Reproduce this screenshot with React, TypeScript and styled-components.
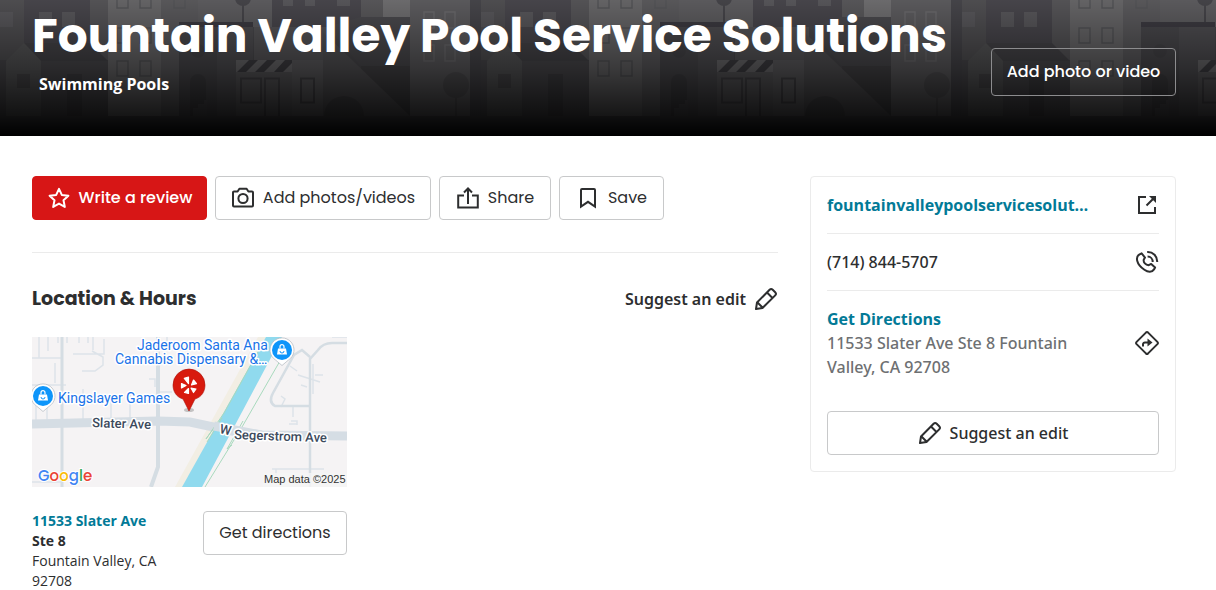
import React from "react";
import styled, { createGlobalStyle, css } from "styled-components";

const display = `Poppins, Inter, "Liberation Sans", sans-serif`;
const body = `"Open Sans", "Noto Sans", sans-serif`;
const label = `"Noto Sans", "Open Sans", sans-serif`;
const ink = "#2d2e2f";
const teal = "#027a97";
const line = "#ebebeb";

const GlobalStyle = createGlobalStyle`
  *, *::before, *::after { box-sizing: border-box; }
  body { margin: 0; background: #fff; color: ${ink}; font-family: ${body}; font-size: 16px; line-height: 24px; }
  h1, h2, p, address { margin: 0; font-style: normal; }
  a { color: ${teal}; text-decoration: none; }
  svg { display: block; flex: none; }
`;

const Hero = styled.header`
  display: grid;
  background: #000;
  > * { grid-area: 1 / 1; }
`;
const HeroContent = styled.div`
  position: relative;
  display: flex;
  justify-content: space-between;
  align-items: flex-end;
  padding: 0 40px 40px 32px;
`;
const Title = styled.h1`
  font: 700 47px/56px ${display};
  color: #fff;
  padding-top: 8px;
`;
const Category = styled.a`
  display: inline-block;
  margin: 8px 0 0 7px;
  color: #fff;
  font-weight: 700;
`;
const Columns = styled.main`
  display: flex;
  align-items: flex-start;
  gap: 32px;
  padding: 40px 40px 0 32px;
`;
const Primary = styled.div`
  flex: 1;
  min-width: 0;
`;
const Sidebar = styled.aside`
  flex: 0 0 366px;
  border: 1px solid ${line};
  border-radius: 4px;
  padding: 0 16px 16px;
`;
const Actions = styled.div`
  display: flex;
  gap: 8px;
  padding-bottom: 32px;
  border-bottom: 1px solid ${line};
`;

type ButtonKind = "primary" | "outline" | "hero";
const Button = styled.button<{ $kind?: ButtonKind; $min?: number }>`
  display: flex;
  align-items: center;
  justify-content: center;
  gap: 8px;
  height: 44px;
  min-width: ${(p) => p.$min ?? 0}px;
  padding: 0 12px;
  border: 1px solid #c8c9ca;
  border-radius: 4px;
  background: #fff;
  color: ${ink};
  font: 400 16px/24px ${display};
  white-space: nowrap;
  cursor: pointer;
  ${(p) =>
    p.$kind === "primary" &&
    css`
      background: #d71616;
      border-color: #d71616;
      color: #fff;
      font-weight: 500;
    `}
  ${(p) =>
    p.$kind === "hero" &&
    css`
      height: 48px;
      background: transparent;
      border-color: #8c8c8e;
      color: #fff;
      font-weight: 500;
    `}
`;
const WideButton = styled(Button)`
  width: 100%;
  margin-top: 16px;
  font: 500 16px/24px ${label};
`;
const SectionHead = styled.div`
  display: flex;
  justify-content: space-between;
  align-items: center;
  padding: 32px 0 24px;
`;
const SectionTitle = styled.h2`
  font: 700 19px/28px ${display};
`;
const TextButton = styled.button`
  display: flex;
  align-items: center;
  gap: 8px;
  padding: 0;
  border: 0;
  background: none;
  color: ${ink};
  font: 600 16px/24px ${label};
  cursor: pointer;
`;
const Place = styled.div`
  width: 315px;
`;
const PlaceFoot = styled.div`
  display: flex;
  justify-content: space-between;
  align-items: flex-start;
  padding-top: 24px;
`;
const Address = styled.address`
  width: 140px;
  font-size: 14px;
  line-height: 20px;
  a, strong { font-weight: 700; }
`;
const InfoRow = styled.div`
  display: flex;
  justify-content: space-between;
  align-items: center;
  padding: 16px 0;
  & + & { border-top: 1px solid ${line}; }
`;
const InfoText = styled.div`
  width: 262px;
  font: 500 16px/24px ${label};
  color: ${ink};
  a { display: block; font-family: ${body}; font-weight: 700; overflow: hidden; text-overflow: ellipsis; white-space: nowrap; }
  p { color: #6e7072; }
`;

const Svg = ({ children, w = 2 }: { children: React.ReactNode; w?: number }) => (
  <svg width="24" height="24" viewBox="0 0 24 24" fill="none" stroke="currentColor" strokeWidth={w} strokeLinejoin="round" aria-hidden="true">
    {children}
  </svg>
);
const StarIcon = () => (
  <Svg>
    <path d="M12 2.900 14.800 8.900 21.400 9.700 16.500 14.200 17.800 20.900 12 17.600 6.200 20.900 7.500 14.200 2.600 9.700 9.200 8.900Z" />
  </Svg>
);
const CameraIcon = () => (
  <Svg>
    <path d="M3 5.500H6.600L8.400 2.800H15.600L17.400 5.500H21A1 1 0 0 1 22 6.500V19.500A1 1 0 0 1 21 20.500H3A1 1 0 0 1 2 19.500V6.500A1 1 0 0 1 3 5.500Z" />
    <circle cx="12" cy="12.500" r="4.600" />
  </Svg>
);
const ShareIcon = () => (
  <Svg>
    <path d="M8 9.500H2.200V21.500H21.800V9.500H16M12 18V3M8 6.500 12 2.500 16 6.500" strokeLinejoin="miter" />
  </Svg>
);
const BookmarkIcon = () => (
  <Svg>
    <path d="M6 3H18A1 1 0 0 1 19 4V20.500L12 15.800 5 20.500V4A1 1 0 0 1 6 3Z" strokeLinejoin="miter" />
  </Svg>
);
const PencilIcon = () => (
  <Svg>
    <path d="M2 22 3 15.500 15.600 2.800A2.200 2.200 0 0 1 18.700 2.800L21.200 5.300A2.200 2.200 0 0 1 21.200 8.400L8.500 21ZM13 5.500 18.500 11M3.500 15.500 8.500 20.500" />
  </Svg>
);
const ExternalIcon = () => (
  <Svg>
    <path d="M11 4H4V20H20V14M11.500 12.500 19 5" strokeLinejoin="miter" />
    <path d="M14 3H21V10Z" fill="currentColor" stroke="none" />
  </Svg>
);
const PhoneIcon = () => (
  <Svg>
    <path d="M4.200 4.600 6.600 3.300 10 7.600 8.700 9.800C8.300 12.500 10.500 15 13.700 15.200L16.200 13.900 20.100 17.400 19 19.400C17 22.600 13.200 22.500 9.400 19.800 5.800 17.300 3 14 2.200 10.700 1.600 8 2.400 5.700 4.200 4.600Z" />
    <path d="M12.200 2C18 1.700 22.500 6.200 22.200 12M12.600 6.600C15.600 6.600 17.700 8.800 17.700 12" />
  </Svg>
);
const DirectionsIcon = () => (
  <Svg>
    <path d="M10.900 1.600A1.600 1.600 0 0 1 13.100 1.600L22.400 10.900A1.600 1.600 0 0 1 22.400 13.100L13.100 22.400A1.600 1.600 0 0 1 10.900 22.400L1.600 13.100A1.600 1.600 0 0 1 1.600 10.900Z" />
    <path d="M8 15.500V13A2 2 0 0 1 10 11.500H14" />
    <path d="M12.500 7.500 17.500 11.500 12.500 15.500Z" fill="currentColor" stroke="none" />
  </Svg>
);

const Outline = ({ x, y, w, h }: { x: number; y: number; w: number; h: number }) => (
  <rect x={x} y={y} width={w} height={h} fill="none" stroke="#58585b" strokeWidth="1.500" />
);

const Skyline = () => (
  <svg width="100%" height="136" aria-hidden="true">
    <defs>
      <linearGradient id="shade" x1="0" y1="0" x2="0" y2="1">
        <stop offset="0" stopColor="#000" stopOpacity="0.080" />
        <stop offset="0.500" stopColor="#000" stopOpacity="0.460" />
        <stop offset="0.850" stopColor="#000" stopOpacity="0.800" />
        <stop offset="1" stopColor="#000" />
      </linearGradient>
      <pattern id="street" width="481" height="136" patternUnits="userSpaceOnUse">
        <rect width="481" height="136" fill="#4c4b4f" />
        <rect width="24" height="60" fill="#545356" />
        <rect x="24" width="66" height="43" fill="#4c4a50" />
        <rect x="90" width="18" height="60" fill="#5a595c" />
        <path d="M0 12h13v15H0zM39 12h13v15H39zM62 12h13v15H62z" fill="#5c5b5f" />
        <path d="M24 43H90L108 61H41Z" fill="#48474b" />
        <path d="M6 61 24 43 41 61V116H6Z" fill="#58585a" />
        <rect x="41" y="61" width="67" height="55" fill="#4d4c50" />
        <rect x="17" y="74" width="13" height="14" fill="#4c4b4e" />
        <rect x="67" y="74" width="15" height="42" fill="#444347" />
        <rect x="108" width="53" height="116" fill="#6c6b6d" />
        <rect x="161" width="37" height="116" fill="#5f5e61" />
        {[-7, 28, 61].map((y) => (
          <g key={y}>
            <Outline x={117} y={y} w={11} h={15} />
            <Outline x={140} y={y} w={11} h={15} />
          </g>
        ))}
        <Outline x={174} y={-7} w={11} h={15} />
        <rect x="198" width="74" height="27" fill="#626164" />
        <circle cx="243" cy="-2" r="8" fill="#49484d" />
        <path d="M243 4V22" stroke="#49484d" strokeWidth="2" />
        <rect x="179" y="27" width="38" height="89" fill="#4c4b4f" />
        <rect x="217" y="27" width="36" height="89" fill="#525155" />
        <rect x="179" y="22" width="74" height="5" fill="#403e45" />
        <circle cx="198" cy="51" r="7" fill="#47464a" />
        <path d="M190 116V82a8 8 0 0 1 16 0v34Z" fill="#444347" />
        <path d="M193 112v-4h5v-4h6v-4h3v16h-14z" fill="#4f4e52" />
        <rect x="254" y="27" width="74" height="33" fill="#5a595c" />
        <rect x="236" y="60" width="56" height="56" fill="#5c5b5e" />
        <rect x="236" y="60" width="56" height="12" fill="#6e6d70" />
        <path d="M249 60h9l-12 12h-9zM267 60h9l-12 12h-9zM285 60h7v3l-9 9h-9z" fill="#414045" />
        <rect x="292" y="60" width="31" height="56" fill="#616063" />
        <path d="M241 78.500h20v24h-20zM265 116V78.500h14V116M301 78.500h13v24h-13z" fill="none" stroke="#48474b" strokeWidth="2" />
        <rect x="272" width="89" height="27" fill="#4c4a50" />
        <path d="M283 0h10v6h-10zM305 0h10v6h-10zM337 0h13v6h-13z" fill="#5c5b5f" />
        <rect x="361" width="22" height="17" fill="#5d5c5f" />
        <rect x="383" width="27" height="17" fill="#747375" />
        <path d="M328 27 361 17H410V66H361Z" fill="#4e4d51" />
        <path d="M361 66H410V116H361Z" fill="#474649" />
        <path d="M323 32 410 116H323Z" fill="#565558" />
        <path d="M324 116a20 20 0 0 1 40 0z" fill="#4a494c" />
        <rect x="410" width="60" height="116" fill="#616063" />
        {[12, 45].map((y) => (
          <path key={y} d={`M424 ${y}h10v16h-10zM445 ${y}h10v16h-10z`} fill="none" stroke="#6e6d70" strokeWidth="1.500" />
        ))}
        <circle cx="456" cy="85" r="13" fill="#555457" />
        <path d="M456 97V116" stroke="#555457" strokeWidth="2" />
        <rect x="470" width="11" height="116" fill="#4a494e" />
        <rect y="116" width="481" height="20" fill="#4c4b4f" />
      </pattern>
    </defs>
    <rect width="100%" height="136" fill="url(#street)" />
    <rect width="100%" height="136" fill="url(#shade)" />
  </svg>
);

const ShopPin = ({ x, y }: { x: number; y: number }) => (
  <g transform={`translate(${x} ${y})`}>
    <path d="M0 15.500 -6.500 10A12 12 0 1 1 6.500 10Z" fill="#fff" stroke="#b9bec4" strokeWidth="0.800" />
    <circle r="10" fill="#0d95fa" />
    <path d="M-4-1.500H4L5 4.500H-5Z" fill="#fff" />
    <path d="M-2-1.500V-3.300A2 2 0 0 1 2-3.300V-1.500" fill="none" stroke="#fff" strokeWidth="1.200" />
    <path d="M-2 1A2 2 0 0 0 2 1" fill="none" stroke="#0d95fa" />
  </g>
);

const MapLabel = styled.text`
  font-family: Roboto, "Liberation Sans", sans-serif;
  font-size: 14px;
  fill: #1a73e8;
  stroke: #fff;
  stroke-width: 3px;
  stroke-linejoin: round;
  paint-order: stroke;
`;
const RoadLabel = styled(MapLabel)`
  font-size: 13px;
  font-weight: 500;
  fill: #3c4a5c;
`;
const Credit = styled.text`
  font: 11px "Liberation Sans", Arial, sans-serif;
  fill: #333;
`;
const Google = styled.text`
  font: 500 15px ${display};
  stroke: #fff;
  stroke-width: 2px;
  paint-order: stroke;
`;

const StreetMap = () => (
  <svg width="315" height="150" viewBox="0 0 315 150" role="img" aria-label="Map of 11533 Slater Ave">
    <rect width="315" height="150" fill="#f5f3f4" />
    <path d="M226 0 143 150H160L242 0Z" fill="#f2eee4" />
    <g fill="none" stroke="#dde3e9" strokeWidth="1.500">
      <path d="M0 21H30M7 0V21M16 14V0M41 17H72V2M26 0V6M35 0V6M47 0V6M56 0V6M61 13V0M60 14 71 20V28L63 34 50 34M23 26V46M0 48H34M4 48V84M15 60V84M51 52V84M79 60V84M98 57V82M98 82H120M117 42H123V50M128 55H140M0 145H30M135 0V12" />
      <path d="M281 27V57M266 38 288 45M269 48 275 50M258 29 265 34M283 38H291M300 0H315M249 59 253 62 249 70M261 70V80M259 84H265V88M257 87H265M240 132H292M244 132V140" />
    </g>
    <g fill="none" stroke="#d5dde3" strokeWidth="3">
      <path d="M30 0V150" />
      <path d="M126 0V130L119 150" strokeWidth="4" />
      <path d="M278 150V22L286 13Q291 6 300 6H315M278 20 270 13 262 18 241 56Q236 65 243 69H278" strokeWidth="2.500" />
    </g>
    <path d="M0 87 126 84 158 85 200 94 230 98 315 99" fill="none" stroke="#d5dde4" strokeWidth="9" />
    <path d="M234 0 150 150H170L250 0Z" fill="#90daee" />
    <path d="M231 6 192 76 174 102 184 88M256 10 210 90 173 150M190 81 175 105M211 84 195 112 200 108" fill="none" stroke="#a8d9bd" strokeWidth="1" />
    <path d="M182 89 229 98" stroke="#d5dde4" strokeWidth="9" />
    <ShopPin x={250} y={13} />
    <ShopPin x={11} y={59} />
    <MapLabel x="105" y="13">Jaderoom Santa Ana</MapLabel>
    <MapLabel x="83" y="27">Cannabis Dispensary &amp;…</MapLabel>
    <MapLabel x="26" y="66">Kingslayer Games</MapLabel>
    <RoadLabel x="60" y="90" transform="rotate(2 60 90)">Slater Ave</RoadLabel>
    <RoadLabel x="187" y="96" transform="rotate(12 187 96)">W</RoadLabel>
    <RoadLabel x="202" y="102" transform="rotate(2 202 102)">Segerstrom Ave</RoadLabel>
    <ellipse cx="157" cy="73" rx="5" ry="2" fill="#777" opacity="0.400" />
    <path d="M157 74 151 62C144 60 141 54 141 48A16 16 0 0 1 173 48C173 54 170 60 163 62Z" fill="#d81a0e" stroke="#a91109" strokeWidth="0.600" />
    <g fill="#fff" stroke="#fff" strokeWidth="1.200" strokeLinejoin="round">
      <path d="M156.500 46.500V40L152.300 41.300Z" />
      <path d="M154 48.500 149.500 46.500 149.500 51Z" />
      <path d="M156.500 51.500 152.500 55.500 156.500 56.500Z" />
      <path d="M159 51 161.500 55.500 164 52Z" />
      <path d="M159.500 48 161.500 43 164.500 46.700Z" />
    </g>
    <Google x="6" y="144">
      <tspan fill="#4285f4">G</tspan>
      <tspan fill="#ea4335">o</tspan>
      <tspan fill="#fbbc05">o</tspan>
      <tspan fill="#4285f4">g</tspan>
      <tspan fill="#34a853">l</tspan>
      <tspan fill="#ea4335">e</tspan>
    </Google>
    <rect x="231" y="136" width="84" height="14" fill="#f5f5f5" opacity="0.800" />
    <Credit x="232" y="146">Map data ©2025</Credit>
  </svg>
);

export default function App() {
  return (
    <>
      <GlobalStyle />
      <Hero>
        <Skyline />
        <HeroContent>
          <div>
            <Title>Fountain Valley Pool Service Solutions</Title>
            <Category href="#pools">Swimming Pools</Category>
          </div>
          <Button $kind="hero" $min={185}>Add photo or video</Button>
        </HeroContent>
      </Hero>
      <Columns>
        <Primary>
          <Actions>
            <Button $kind="primary" $min={175}><StarIcon />Write a review</Button>
            <Button $min={216}><CameraIcon />Add photos/videos</Button>
            <Button $min={112}><ShareIcon />Share</Button>
            <Button $min={105}><BookmarkIcon />Save</Button>
          </Actions>
          <SectionHead>
            <SectionTitle>Location &amp; Hours</SectionTitle>
            <TextButton>Suggest an edit<PencilIcon /></TextButton>
          </SectionHead>
          <Place>
            <StreetMap />
            <PlaceFoot>
              <Address>
                <a href="#map">11533 Slater Ave</a>
                <br />
                <strong>Ste 8</strong>
                <br />
                Fountain Valley, CA 92708
              </Address>
              <Button $min={144}>Get directions</Button>
            </PlaceFoot>
          </Place>
        </Primary>
        <Sidebar>
          <InfoRow>
            <InfoText><a href="#site">fountainvalleypoolservicesolutions.com</a></InfoText>
            <ExternalIcon />
          </InfoRow>
          <InfoRow>
            <InfoText>(714) 844-5707</InfoText>
            <PhoneIcon />
          </InfoRow>
          <InfoRow>
            <InfoText>
              <a href="#directions">Get Directions</a>
              <p>11533 Slater Ave Ste 8 Fountain Valley, CA 92708</p>
            </InfoText>
            <DirectionsIcon />
          </InfoRow>
          <WideButton><PencilIcon />Suggest an edit</WideButton>
        </Sidebar>
      </Columns>
    </>
  );
}
